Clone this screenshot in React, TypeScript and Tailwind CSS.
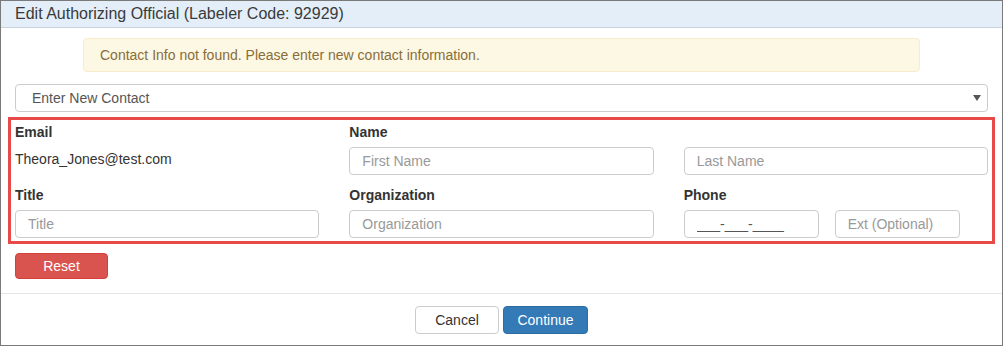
import { useState } from 'react';

export default function App() {
  const [phone, setPhone] = useState('___-___-____');

  const inputCls =
    'h-[28px] w-full rounded-[4px] border border-[#cccccc] bg-white px-[12px] text-[14px] text-[#555] placeholder:text-[#999] outline-none';

  return (
    <div
      className="h-[346px] w-[1003px] overflow-hidden border border-[#7a7a7a] bg-white text-[14px] text-[#333]"
      style={{ fontFamily: '"Liberation Sans", Arial, sans-serif' }}
    >
      {/* header */}
      <div className="flex h-[27px] items-center border-b border-[#c9d4df] bg-[#e3eef9] px-[14px] text-[16px] leading-[18px] text-[#3a3a3a]">
        Edit Authorizing Official (Labeler Code: 92929)
      </div>

      <div className="px-[14px] pt-[10px] pb-[14px]">
        <div className="mx-[68px] flex h-[34px] items-center rounded-[4px] border border-[#faebcc] bg-[#fcf8e3] px-[16px] text-[#8a6d3b]">
          Contact Info not found. Please enter new contact information.
        </div>

        <div className="mt-[12px] flex h-[28px] items-center justify-between rounded-[4px] border border-[#cccccc] bg-white pl-[16px] pr-[6px] text-[#555]">
          <span>Enter New Contact</span>
          <span className="h-0 w-0 border-x-[4px] border-t-[6px] border-x-transparent border-t-[#555]" />
        </div>

        <div className="-mx-[7px] mt-[5px] border-[3px] border-[#e84a4a] px-[4px] pt-[2px] pb-[3px]">
          <div className="grid grid-cols-3 gap-x-[30px]">
            <div>
              <div className="mb-[5px] font-bold leading-[20px]">Email</div>
              <div className="flex h-[28px] items-center pb-[4px]">Theora_Jones@test.com</div>
            </div>
            <div className="col-span-2">
              <div className="mb-[5px] font-bold leading-[20px]">Name</div>
              <div className="grid grid-cols-2 gap-x-[30px]">
                <input className={inputCls} placeholder="First Name" />
                <input className={inputCls} placeholder="Last Name" />
              </div>
            </div>

            <div className="mt-[10px]">
              <div className="mb-[5px] font-bold leading-[20px]">Title</div>
              <input className={inputCls} placeholder="Title" />
            </div>
            <div className="mt-[10px]">
              <div className="mb-[5px] font-bold leading-[20px]">Organization</div>
              <input className={inputCls} placeholder="Organization" />
            </div>
            <div className="mt-[10px]">
              <div className="mb-[5px] font-bold leading-[20px]">Phone</div>
              <div className="flex gap-[16px]">
                <input
                  className={`${inputCls} !w-[135px] text-[#222]`}
                  value={phone}
                  onChange={(e) => setPhone(e.target.value)}
                />
                <input className={`${inputCls} !w-[125px]`} placeholder="Ext (Optional)" />
              </div>
            </div>
          </div>
        </div>

        <button className="mt-[9px] h-[26px] w-[93px] rounded-[4px] border border-[#d43f3a] bg-[#d9534f] text-[14px] text-white">
          Reset
        </button>
      </div>

      <div className="flex justify-center gap-[4px] border-t border-[#e5e5e5] pt-[12px]">
        <button className="h-[28px] w-[84px] rounded-[4px] border border-[#cccccc] bg-white text-[14px] text-[#333]">
          Cancel
        </button>
        <button className="h-[28px] w-[85px] rounded-[4px] border border-[#2e6da4] bg-[#337ab7] text-[14px] text-white">
          Continue
        </button>
      </div>
    </div>
  );
}
